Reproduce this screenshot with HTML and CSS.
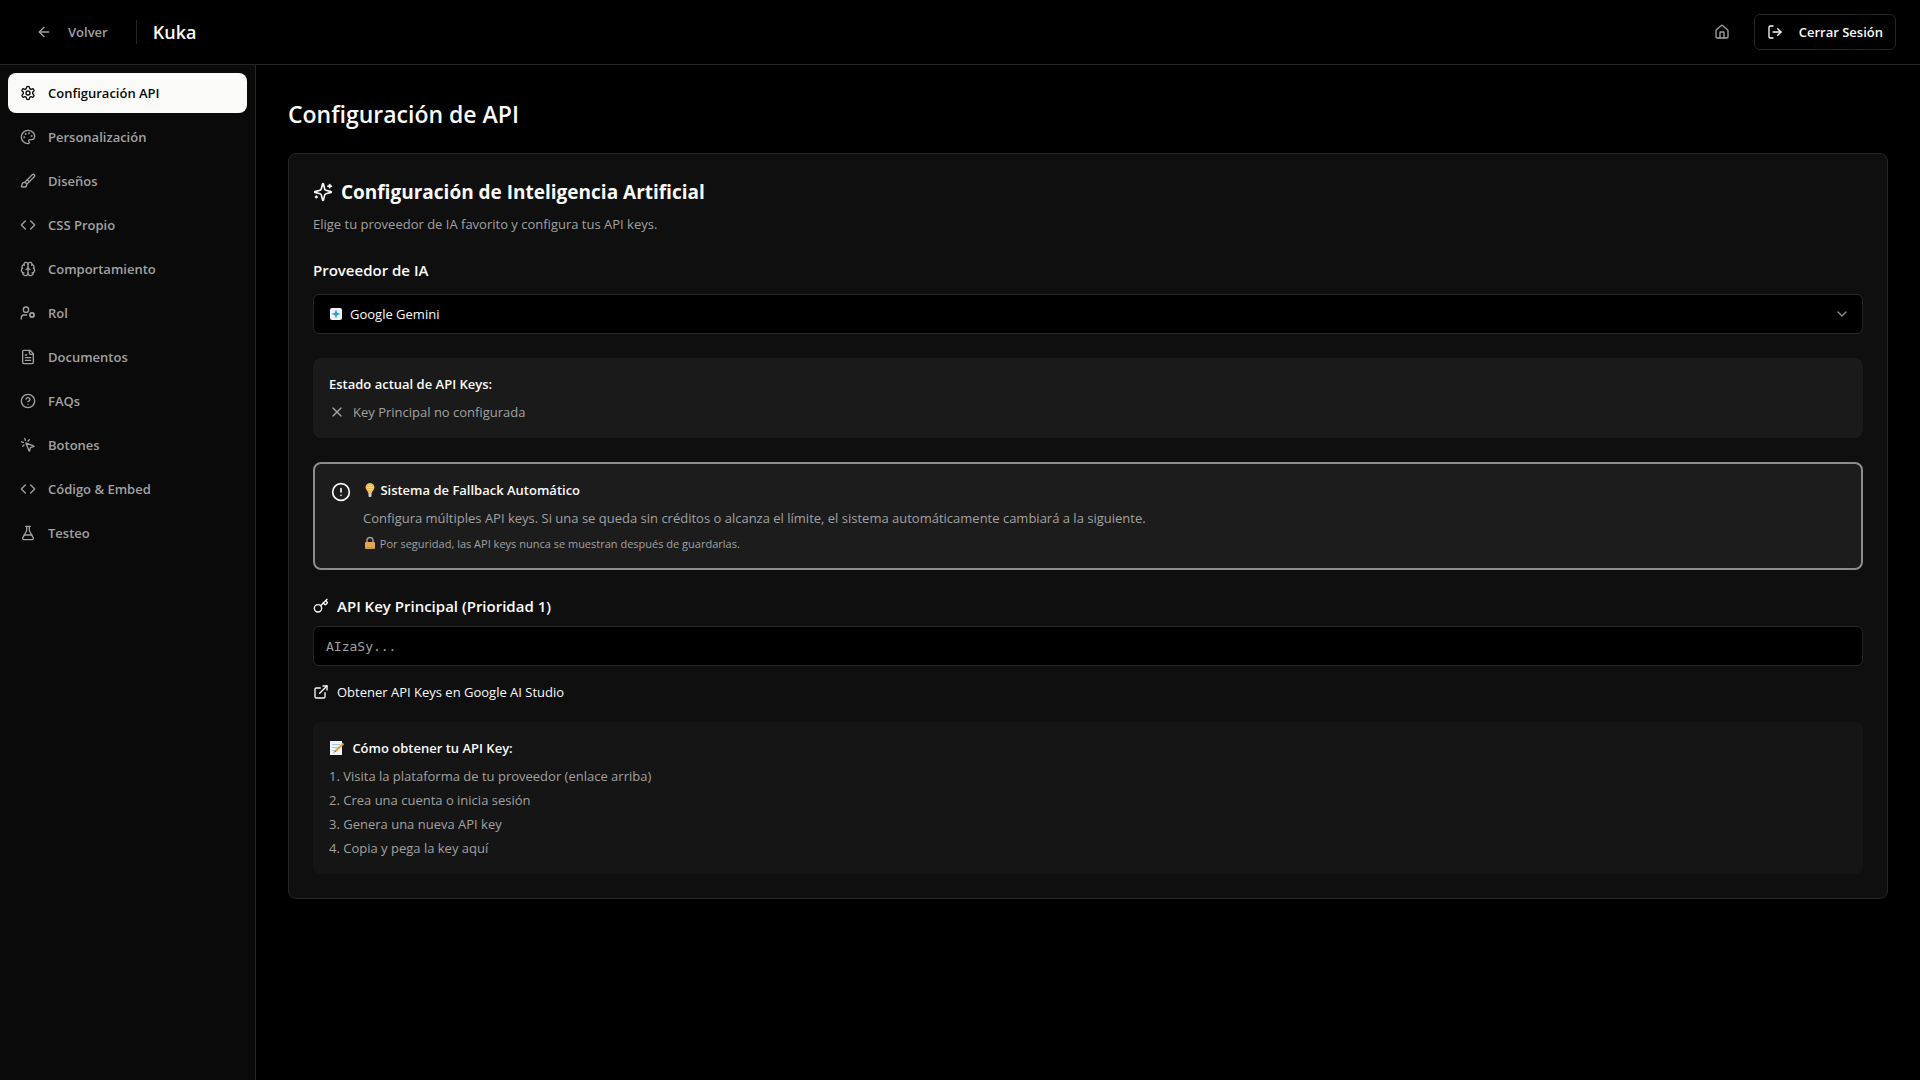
FILE: index.html
```html
<!DOCTYPE html>
<html lang="es">
<head>
    <meta charset="UTF-8">
    <meta name="viewport" content="width=device-width, initial-scale=1.0">
    <title>Kuka - Configuración API</title>
    <link rel="stylesheet" href="styles.css">
</head>
<body>
    <header class="topbar">
        <div class="topbar-group">
            <button type="button" class="btn btn-ghost">
                <svg class="icon" viewBox="0 0 24 24"><path d="m12 19-7-7 7-7"/><path d="M19 12H5"/></svg>
                Volver
            </button>
            <span class="divider"></span>
            <span class="brand">Kuka</span>
        </div>
        <div class="topbar-group topbar-right">
            <button type="button" class="btn btn-ghost" aria-label="Inicio">
                <svg class="icon" viewBox="0 0 24 24"><path d="M15 21v-8a1 1 0 0 0-1-1h-4a1 1 0 0 0-1 1v8"/><path d="M3 10a2 2 0 0 1 .709-1.528l7-6a2 2 0 0 1 2.582 0l7 6A2 2 0 0 1 21 10v9a2 2 0 0 1-2 2H5a2 2 0 0 1-2-2z"/></svg>
            </button>
            <button type="button" class="btn btn-outline">
                <svg class="icon" viewBox="0 0 24 24"><path d="m16 17 5-5-5-5"/><path d="M21 12H9"/><path d="M9 21H5a2 2 0 0 1-2-2V5a2 2 0 0 1 2-2h4"/></svg>
                Cerrar Sesión
            </button>
        </div>
    </header>

    <div class="layout">
        <nav class="sidebar">
            <a href="#api" class="nav-link active">
                <svg class="icon" viewBox="0 0 24 24"><path d="M12.22 2h-.44a2 2 0 0 0-2 2v.18a2 2 0 0 1-1 1.73l-.43.25a2 2 0 0 1-2 0l-.15-.08a2 2 0 0 0-2.73.73l-.22.38a2 2 0 0 0 .73 2.73l.15.1a2 2 0 0 1 1 1.72v.51a2 2 0 0 1-1 1.74l-.15.09a2 2 0 0 0-.73 2.73l.22.38a2 2 0 0 0 2.73.73l.15-.08a2 2 0 0 1 2 0l.43.25a2 2 0 0 1 1 1.73V20a2 2 0 0 0 2 2h.44a2 2 0 0 0 2-2v-.18a2 2 0 0 1 1-1.73l.43-.25a2 2 0 0 1 2 0l.15.08a2 2 0 0 0 2.73-.73l.22-.39a2 2 0 0 0-.73-2.73l-.15-.08a2 2 0 0 1-1-1.74v-.5a2 2 0 0 1 1-1.74l.15-.09a2 2 0 0 0 .73-2.73l-.22-.38a2 2 0 0 0-2.73-.73l-.15.08a2 2 0 0 1-2 0l-.43-.25a2 2 0 0 1-1-1.73V4a2 2 0 0 0-2-2z"/><circle cx="12" cy="12" r="3"/></svg>
                Configuración API
            </a>
            <a href="#personalizacion" class="nav-link">
                <svg class="icon" viewBox="0 0 24 24"><path d="M12 22a1 1 0 0 1 0-20 10 9 0 0 1 10 9 5 5 0 0 1-5 5h-2.25a1.75 1.75 0 0 0-1.4 2.8l.3.4a1.75 1.75 0 0 1-1.4 2.8z"/><circle class="dot" cx="13.5" cy="6.5" r=".5"/><circle class="dot" cx="17.5" cy="10.5" r=".5"/><circle class="dot" cx="6.5" cy="12.5" r=".5"/><circle class="dot" cx="8.5" cy="7.5" r=".5"/></svg>
                Personalización
            </a>
            <a href="#disenos" class="nav-link">
                <svg class="icon" viewBox="0 0 24 24"><path d="m11 10 3 3"/><path d="M6.5 21A3.5 3.5 0 1 0 3 17.5a2.62 2.62 0 0 1-.708 1.792A1 1 0 0 0 3 21z"/><path d="M9.969 17.031 21.378 5.624a1 1 0 0 0-3.002-3.002L6.967 14.031"/></svg>
                Diseños
            </a>
            <a href="#css" class="nav-link">
                <svg class="icon" viewBox="0 0 24 24"><path d="m16 18 6-6-6-6"/><path d="m8 6-6 6 6 6"/></svg>
                CSS Propio
            </a>
            <a href="#comportamiento" class="nav-link">
                <svg class="icon" viewBox="0 0 24 24"><path d="M12 18V5"/><path d="M15 13a4.17 4.17 0 0 1-3-4 4.17 4.17 0 0 1-3 4"/><path d="M17.598 6.5A3 3 0 1 0 12 5a3 3 0 1 0-5.598 1.5"/><path d="M17.997 5.125a4 4 0 0 1 2.526 5.77"/><path d="M18 18a4 4 0 0 0 2-7.464"/><path d="M19.967 17.483A4 4 0 1 1 12 18a4 4 0 1 1-7.967-.517"/><path d="M6 18a4 4 0 0 1-2-7.464"/><path d="M6.003 5.125a4 4 0 0 0-2.526 5.77"/></svg>
                Comportamiento
            </a>
            <a href="#rol" class="nav-link">
                <svg class="icon" viewBox="0 0 24 24"><path d="M10 15H6a4 4 0 0 0-4 4v2"/><circle cx="9" cy="7" r="4"/><circle cx="18" cy="15" r="3"/><path d="m14.305 16.53.923-.382"/><path d="m15.228 13.852-.923-.383"/><path d="m16.852 12.228-.383-.923"/><path d="m16.852 17.772-.383.924"/><path d="m19.148 12.228.383-.923"/><path d="m19.53 18.696-.382-.924"/><path d="m20.772 13.852.924-.383"/><path d="m20.772 16.148.924.383"/></svg>
                Rol
            </a>
            <a href="#documentos" class="nav-link">
                <svg class="icon" viewBox="0 0 24 24"><path d="M15 2H6a2 2 0 0 0-2 2v16a2 2 0 0 0 2 2h12a2 2 0 0 0 2-2V7z"/><path d="M14 2v4a2 2 0 0 0 2 2h4"/><path d="M10 9H8"/><path d="M16 13H8"/><path d="M16 17H8"/></svg>
                Documentos
            </a>
            <a href="#faqs" class="nav-link">
                <svg class="icon" viewBox="0 0 24 24"><circle cx="12" cy="12" r="10"/><path d="M9.09 9a3 3 0 0 1 5.83 1c0 2-3 3-3 3"/><path d="M12 17h.01"/></svg>
                FAQs
            </a>
            <a href="#botones" class="nav-link">
                <svg class="icon" viewBox="0 0 24 24"><path d="M14 4.1 12 6"/><path d="m5.1 8-2.9-.8"/><path d="m6 12-1.9 2"/><path d="M7.2 2.2 8 5.1"/><path d="M9.037 9.69a.498.498 0 0 1 .653-.653l11 4.5a.5.5 0 0 1-.074.949l-4.349 1.041a1 1 0 0 0-.74.739l-1.04 4.35a.5.5 0 0 1-.95.074z"/></svg>
                Botones
            </a>
            <a href="#embed" class="nav-link">
                <svg class="icon" viewBox="0 0 24 24"><path d="m16 18 6-6-6-6"/><path d="m8 6-6 6 6 6"/></svg>
                Código &amp; Embed
            </a>
            <a href="#testeo" class="nav-link">
                <svg class="icon" viewBox="0 0 24 24"><path d="M14 2v6a2 2 0 0 0 .245.96l5.51 10.08A2 2 0 0 1 18 22H6a2 2 0 0 1-1.755-2.96l5.51-10.08A2 2 0 0 0 10 8V2"/><path d="M6.453 15h11.094"/><path d="M8.5 2h7"/></svg>
                Testeo
            </a>
        </nav>

        <main class="content">
            <h1>Configuración de API</h1>

            <section class="card">
                <h2>
                    <svg class="icon icon-md" viewBox="0 0 24 24"><path d="M9.937 15.5A2 2 0 0 0 8.5 14.063l-6.135-1.582a.5.5 0 0 1 0-.962L8.5 9.936A2 2 0 0 0 9.937 8.5l1.582-6.135a.5.5 0 0 1 .963 0L14.063 8.5A2 2 0 0 0 15.5 9.937l6.135 1.581a.5.5 0 0 1 0 .964L15.5 14.063a2 2 0 0 0-1.437 1.437l-1.582 6.135a.5.5 0 0 1-.963 0z"/><path d="M20 3v4"/><path d="M22 5h-4"/><path d="M4 17v2"/><path d="M5 18H3"/></svg>
                    Configuración de Inteligencia Artificial
                </h2>
                <p class="subtitle">Elige tu proveedor de IA favorito y configura tus API keys.</p>

                <label class="field-label" for="proveedor">Proveedor de IA</label>
                <div class="select-wrap">
                    <svg class="select-logo" viewBox="0 0 14 14"><rect x="1" y="1" width="12" height="12" rx="2" fill="#eef3f8"/><path d="M7 2.5 8.3 5.7 11.5 7 8.3 8.3 7 11.5 5.7 8.3 2.5 7 5.7 5.7z" fill="#3d9bd3"/></svg>
                    <select id="proveedor">
                        <option>Google Gemini</option>
                    </select>
                    <svg class="icon select-arrow" viewBox="0 0 24 24"><path d="m6 9 6 6 6-6"/></svg>
                </div>

                <div class="box status">
                    <h3>Estado actual de API Keys:</h3>
                    <p class="status-row">
                        <svg class="icon" viewBox="0 0 24 24"><path d="M18 6 6 18"/><path d="m6 6 12 12"/></svg>
                        Key Principal no configurada
                    </p>
                </div>

                <div class="box notice">
                    <svg class="icon icon-md notice-icon" viewBox="0 0 24 24"><circle cx="12" cy="12" r="10"/><path d="M12 8v4"/><path d="M12 16h.01"/></svg>
                    <div>
                        <h3>
                            <svg class="emoji" viewBox="0 0 14 14"><path d="M7 0a4.5 4.5 0 0 0-4.5 4.5C2.5 7 5 7.5 5 10h4c0-2.500 2.500-3 2.500-5.500A4.500 4.500 0 0 0 7 0z" fill="#f2b95c"/><path d="M5 2.5h4M4 4.5h6M5 6.5h4" stroke="#ffe3a0"/><path d="M5.5 10h3v3a1 1 0 0 1-1 1h-1a1 1 0 0 1-1-1z" fill="#c3d3dc"/></svg>
                            Sistema de Fallback Automático
                        </h3>
                        <p>Configura múltiples API keys. Si una se queda sin créditos o alcanza el límite, el sistema automáticamente cambiará a la siguiente.</p>
                        <p class="small">
                            <svg class="emoji" viewBox="0 0 14 14"><path d="M4 7V4.500a3 3 0 0 1 6 0V7" fill="none" stroke="#9a9a9a" stroke-width="1.5"/><rect x="2" y="6" width="10" height="7" rx="1" fill="#e0a94f"/><path d="M2 12h10" stroke="#b9823a"/></svg>
                            Por seguridad, las API keys nunca se muestran después de guardarlas.
                        </p>
                    </div>
                </div>

                <label class="field-label key-label" for="apikey">
                    <svg class="icon" viewBox="0 0 24 24"><path d="m15.5 7.5 2.3 2.3a1 1 0 0 0 1.4 0l2.1-2.1a1 1 0 0 0 0-1.4L19 4"/><path d="m21 2-9.6 9.6"/><circle cx="7.5" cy="15.5" r="5.5"/></svg>
                    API Key Principal (Prioridad 1)
                </label>
                <input type="password" id="apikey" placeholder="AIzaSy...">
                <a href="#studio" class="ext-link">
                    <svg class="icon" viewBox="0 0 24 24"><path d="M15 3h6v6"/><path d="M10 14 21 3"/><path d="M18 13v6a2 2 0 0 1-2 2H5a2 2 0 0 1-2-2V8a2 2 0 0 1 2-2h6"/></svg>
                    Obtener API Keys en Google AI Studio
                </a>

                <div class="box help">
                    <h3>
                        <svg class="emoji emoji-note" viewBox="0 0 16 14"><path d="M1 0h12v14H1z" fill="#f4f4f4"/><path d="M3 3.5h8M3 6.5h7M3 9.5h5" stroke="#9ccbe4"/><path d="m6 10.5 8.5-8" stroke="#e9a23b" stroke-width="2"/><path d="m5 11.5 1.5-1.5" stroke="#555"/></svg>
                        Cómo obtener tu API Key:
                    </h3>
                    <ol>
                        <li>Visita la plataforma de tu proveedor (enlace arriba)</li>
                        <li>Crea una cuenta o inicia sesión</li>
                        <li>Genera una nueva API key</li>
                        <li>Copia y pega la key aquí</li>
                    </ol>
                </div>
            </section>
        </main>
    </div>
</body>
</html>
```
FILE: styles.css
```css
* {
    box-sizing: border-box;
    margin: 0;
    padding: 0;
}
body {
    display: flex;
    flex-direction: column;
    min-height: 100vh;
    background-color: #000;
    color: #fafaf9;
    font-family: "Segoe UI", "Open Sans", sans-serif;
    font-size: 13px;
    line-height: 20px;
}
button, select {
    font: inherit;
    cursor: pointer;
}
a {
    color: inherit;
    text-decoration: none;
}
.icon {
    width: 16px;
    height: 16px;
    flex-shrink: 0;
    fill: none;
    stroke: currentColor;
    stroke-width: 2;
    stroke-linecap: round;
    stroke-linejoin: round;
}
.icon-md {
    width: 20px;
    height: 20px;
}
.dot {
    fill: currentColor;
}

/* Cabecera */
.topbar {
    display: flex;
    align-items: center;
    justify-content: space-between;
    padding: 14px 24px;
    border-bottom: 1px solid #262626;
}
.topbar-group {
    display: flex;
    align-items: center;
    gap: 16px;
}
.topbar-right {
    gap: 12px;
}
.btn {
    display: flex;
    align-items: center;
    gap: 16px;
    height: 36px;
    padding: 0 12px;
    border: none;
    border-radius: 6px;
    background: none;
    font-weight: 600;
}
.btn-ghost {
    color: #a1a1a1;
}
.btn-outline {
    border: 1px solid #262626;
    color: #fafaf9;
}
.divider {
    width: 1px;
    height: 24px;
    background-color: #262626;
}
.brand {
    font-size: 18px;
    line-height: 28px;
    font-weight: 600;
}

/* Menú lateral */
.layout {
    display: flex;
    flex: 1;
}
.sidebar {
    display: flex;
    flex-direction: column;
    gap: 4px;
    width: 256px;
    flex-shrink: 0;
    padding: 8px;
    background-color: #0a0a0a;
    border-right: 1px solid #262626;
}
.nav-link {
    display: flex;
    align-items: center;
    gap: 12px;
    padding: 10px 12px;
    border-radius: 8px;
    color: #a1a1a1;
    font-weight: 600;
}
.nav-link.active {
    background-color: #fafaf9;
    color: #0a0a0a;
}

/* Contenido */
.content {
    flex: 1;
    min-width: 0;
    padding: 32px;
}
h1 {
    margin-bottom: 22px;
    font-size: 23px;
    line-height: 34px;
    font-weight: 600;
}
.card {
    padding: 24px;
    background-color: #0f0f0f;
    border: 1px solid #262626;
    border-radius: 8px;
}
h2 {
    display: flex;
    align-items: center;
    gap: 8px;
    margin-bottom: 8px;
    font-size: 19px;
    line-height: 28px;
    font-weight: 700;
}
h3 {
    margin-bottom: 8px;
    font-size: 13px;
    font-weight: 600;
}
.subtitle {
    margin-bottom: 24px;
    color: #a1a1a1;
}
.field-label {
    display: block;
    margin-bottom: 12px;
    font-size: 15px;
    line-height: 24px;
    font-weight: 600;
}
.key-label {
    display: flex;
    align-items: center;
    gap: 8px;
    margin-bottom: 8px;
}
.select-wrap {
    position: relative;
    margin-bottom: 24px;
}
select, input {
    display: block;
    width: 100%;
    height: 40px;
    padding: 0 12px;
    background-color: #000;
    border: 1px solid #262626;
    border-radius: 6px;
    color: #fafaf9;
}
select {
    padding: 0 36px;
    appearance: none;
}
input {
    font-family: Consolas, "DejaVu Sans Mono", monospace;
    font-size: 13px;
}
input::placeholder {
    color: #a1a1a1;
    opacity: 1;
}
.select-logo {
    position: absolute;
    top: 13px;
    left: 16px;
    width: 14px;
    height: 14px;
    pointer-events: none;
}
.select-arrow {
    position: absolute;
    top: 12px;
    right: 13px;
    color: #8b8b98;
    pointer-events: none;
}
.box {
    margin-bottom: 24px;
    padding: 16px;
    border-radius: 8px;
    color: #a1a1a1;
}
.box h3 {
    color: #fafaf9;
}
.status {
    background-color: #1a1a1a;
}
.status-row {
    display: flex;
    align-items: center;
    gap: 8px;
}
.notice {
    display: flex;
    gap: 12px;
    background-color: #1c1c1c;
    border: 2px solid #8c8c88;
}
.notice-icon {
    margin-top: 2px;
    color: #fafaf9;
}
.small {
    margin-top: 8px;
    font-size: 11px;
    line-height: 16px;
}
.emoji {
    width: 14px;
    height: 14px;
    vertical-align: -2px;
}
.emoji-note {
    width: 16px;
    margin-right: 4px;
}
.ext-link {
    display: flex;
    align-items: center;
    gap: 8px;
    margin: 16px 0 20px;
}
.help {
    margin-bottom: 0;
    background-color: #151515;
}
ol {
    display: flex;
    flex-direction: column;
    gap: 4px;
    list-style-position: inside;
}
```
